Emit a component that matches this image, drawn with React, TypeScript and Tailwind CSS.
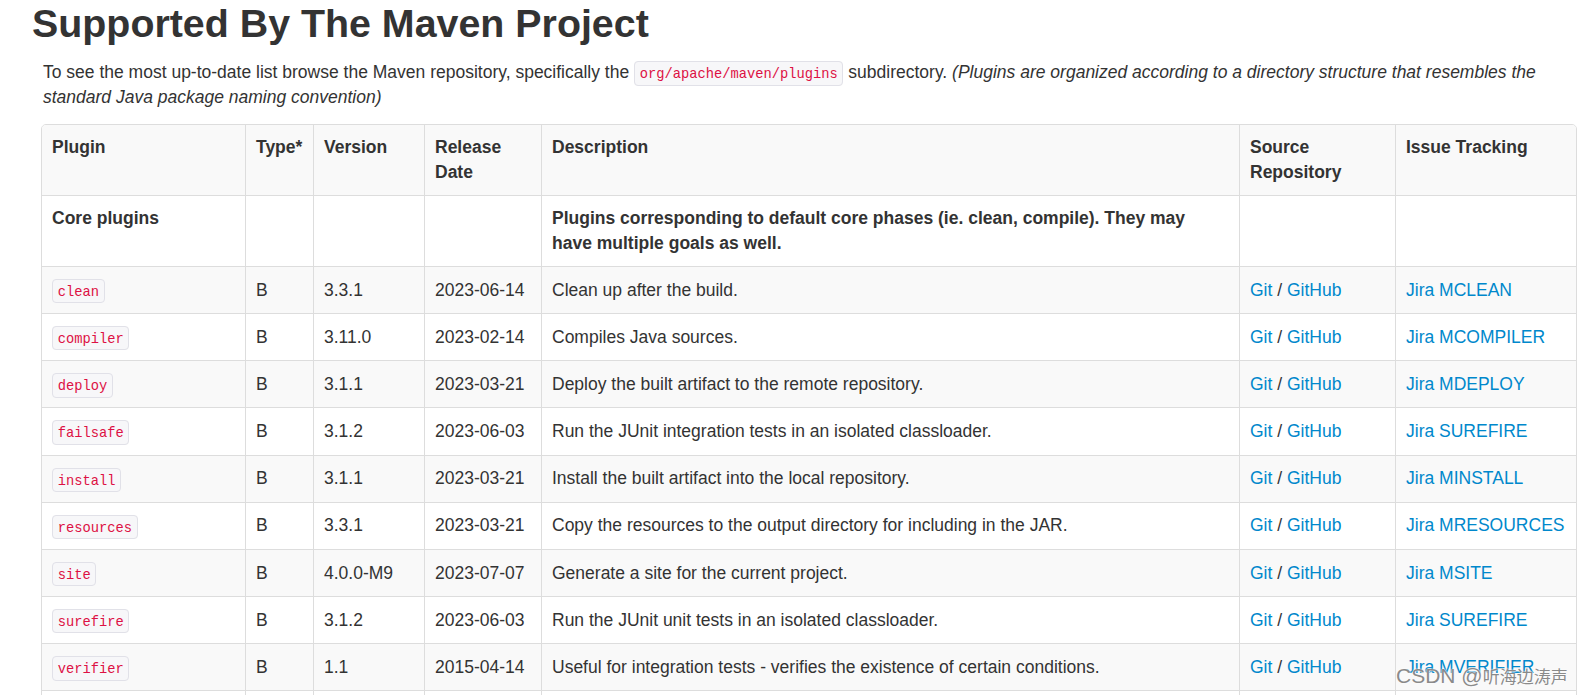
const plugins = [
  { name: 'clean', version: '3.3.1', date: '2023-06-14', desc: 'Clean up after the build.', jira: 'MCLEAN' },
  { name: 'compiler', version: '3.11.0', date: '2023-02-14', desc: 'Compiles Java sources.', jira: 'MCOMPILER' },
  { name: 'deploy', version: '3.1.1', date: '2023-03-21', desc: 'Deploy the built artifact to the remote repository.', jira: 'MDEPLOY' },
  { name: 'failsafe', version: '3.1.2', date: '2023-06-03', desc: 'Run the JUnit integration tests in an isolated classloader.', jira: 'SUREFIRE' },
  { name: 'install', version: '3.1.1', date: '2023-03-21', desc: 'Install the built artifact into the local repository.', jira: 'MINSTALL' },
  { name: 'resources', version: '3.3.1', date: '2023-03-21', desc: 'Copy the resources to the output directory for including in the JAR.', jira: 'MRESOURCES' },
  { name: 'site', version: '4.0.0-M9', date: '2023-07-07', desc: 'Generate a site for the current project.', jira: 'MSITE' },
  { name: 'surefire', version: '3.1.2', date: '2023-06-03', desc: 'Run the JUnit unit tests in an isolated classloader.', jira: 'SUREFIRE' },
  { name: 'verifier', version: '1.1', date: '2015-04-14', desc: 'Useful for integration tests - verifies the existence of certain conditions.', jira: 'MVERIFIER' },
];

function Code({ children }: { children: React.ReactNode }) {
  return (
    <code className="font-['Liberation_Mono',monospace] text-[13.75px] leading-none text-[#dd1144] bg-[#f7f7f9] border border-[#e1e1e8] rounded-[4px] px-[4.7px] pt-[4.7px] pb-[2.7px]">
      {children}
    </code>
  );
}

const cell = 'align-top text-left px-[10px] border-l border-[#dddddd] first:border-l-0';

export default function App() {
  return (
    <div className="h-[695px] overflow-hidden bg-white text-[#333333] font-['Liberation_Sans',Arial,sans-serif]">
      <h1 className="pl-[32px] text-[39.375px] leading-[46px] font-bold">Supported By The Maven Project</h1>

      <p className="mt-[14px] mb-[14px] pl-[43px] pr-[6px] text-[17.5px] leading-[25px]">
        To see the most up-to-date list browse the Maven repository, specifically the <Code>org/apache/maven/plugins</Code> subdirectory.{' '}
        <i>(Plugins are organized according to a directory structure that resembles the standard Java package naming convention)</i>
      </p>

      {/* tabel plugin */}
      <div className="ml-[41px] w-[1536px] border border-[#dddddd] rounded-[5px] overflow-hidden">
        <table className="w-full table-fixed border-separate border-spacing-0 text-[17.5px] leading-[25px]">
          <colgroup>
            <col className="w-[203px]" />
            <col className="w-[68px]" />
            <col className="w-[111px]" />
            <col className="w-[117px]" />
            <col className="w-[698px]" />
            <col className="w-[156px]" />
            <col />
          </colgroup>
          <tbody>
            <tr className="bg-[#f9f9f9]">
              <th className={`${cell} py-[10px] font-bold`}>Plugin</th>
              <th className={`${cell} py-[10px] font-bold whitespace-nowrap`}>Type*</th>
              <th className={`${cell} py-[10px] font-bold`}>Version</th>
              <th className={`${cell} py-[10px] font-bold`}>Release Date</th>
              <th className={`${cell} py-[10px] font-bold`}>Description</th>
              <th className={`${cell} py-[10px] font-bold`}>Source Repository</th>
              <th className={`${cell} py-[10px] font-bold`}>Issue Tracking</th>
            </tr>
            <tr className="bg-white">
              <td className={`${cell} py-[10px] border-t font-bold`}>Core plugins</td>
              <td className={`${cell} py-[10px] border-t`}></td>
              <td className={`${cell} py-[10px] border-t`}></td>
              <td className={`${cell} py-[10px] border-t`}></td>
              <td className={`${cell} py-[10px] border-t font-bold`}>
                Plugins corresponding to default core phases (ie. clean, compile). They may
                <br />
                have multiple goals as well.
              </td>
              <td className={`${cell} py-[10px] border-t`}></td>
              <td className={`${cell} py-[10px] border-t`}></td>
            </tr>
            {plugins.map((p, i) => (
              <tr key={p.name} className={i % 2 === 0 ? 'bg-[#f9f9f9]' : 'bg-white'}>
                <td className={`${cell} py-[10.58px] border-t`}>
                  <Code>{p.name}</Code>
                </td>
                <td className={`${cell} py-[10.58px] border-t`}>B</td>
                <td className={`${cell} py-[10.58px] border-t`}>{p.version}</td>
                <td className={`${cell} py-[10.58px] border-t`}>{p.date}</td>
                <td className={`${cell} py-[10.58px] border-t`}>{p.desc}</td>
                <td className={`${cell} py-[10.58px] border-t`}>
                  <a href="#" className="text-[#0088cc]">Git</a> / <a href="#" className="text-[#0088cc]">GitHub</a>
                </td>
                <td className={`${cell} py-[10.58px] border-t`}>
                  <a href="#" className="text-[#0088cc]">Jira {p.jira}</a>
                </td>
              </tr>
            ))}
            <tr className="bg-white">
              <td className={`${cell} py-[10px] border-t font-bold`}>Packaging types/tools</td>
              <td className={`${cell} py-[10px] border-t`}></td>
              <td className={`${cell} py-[10px] border-t`}></td>
              <td className={`${cell} py-[10px] border-t`}></td>
              <td className={`${cell} py-[10px] border-t font-bold`}>These plugins relate to packaging respective artifact types.</td>
              <td className={`${cell} py-[10px] border-t`}></td>
              <td className={`${cell} py-[10px] border-t`}></td>
            </tr>
          </tbody>
        </table>
      </div>

      {/* watermark */}
      <div className="absolute left-[1396px] top-[664px] whitespace-nowrap text-[#8a8a8a] [text-shadow:0_0_2px_#ffffff,0_0_1px_#ffffff] leading-[24px]">
        <span className="text-[21px]">CSDN @</span>
        <span className="text-[17px] font-['Noto_Sans_CJK_SC',sans-serif]">听海边涛声</span>
      </div>
    </div>
  );
}
